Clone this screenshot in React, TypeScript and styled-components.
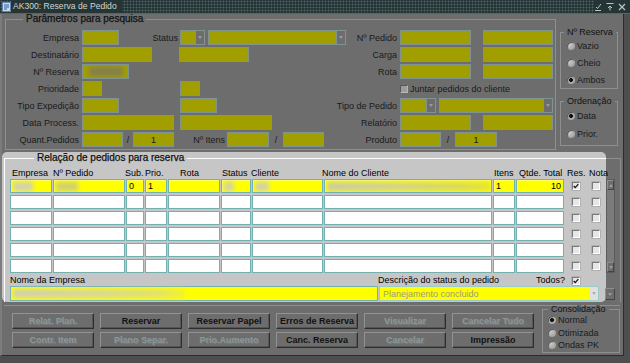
import React from 'react';
import styled, { createGlobalStyle } from 'styled-components';

const DIM_BG = '#6d6d6d';
const DIM_FIELD = '#a19e00';
const DIM_FIELD_BORDER = '#7f9393';
const DIM_LINE = '#8f8f8f';
const PANEL_BG = '#c6c6c6';
const YELLOW = '#ffff00';
const CELL_BORDER = '#74b0b0';

const GlobalStyle = createGlobalStyle`
  html, body { margin: 0; padding: 0; background: #3e3e3e; }
  body { font-family: "Liberation Sans", Arial, sans-serif; font-size: 9px; color: #1a1a1a; }
  * { box-sizing: border-box; }
`;

const Window = styled.div`
  width: 630px;
  height: 363px;
  overflow: hidden;
  display: flex;
  flex-direction: column;
  background: #4e4e4e;
`;

const TitleBar = styled.div`
  height: 14px;
  flex: none;
  display: flex;
  align-items: center;
  background-color: #253535;
  background-image: radial-gradient(circle, #50696a 0.8px, transparent 1.1px);
  background-size: 3px 3px;
  border-bottom: 1px solid #566666;
`;

const TitleIcon = styled.svg`
  margin-left: 2px;
  flex: none;
`;

const TitleText = styled.span`
  background: #253535;
  color: #cdd6d6;
  font-size: 8.6px;
  padding: 0 5px 0 2px;
  line-height: 13px;
  white-space: nowrap;
`;

const TitleSpacer = styled.div`
  flex: 1;
`;

const TitleControls = styled.div`
  display: flex;
  gap: 4px;
  padding-right: 4px;
  background: #253535;
  height: 13px;
  align-items: center;
`;

const Body = styled.div`
  height: 342px;
  width: 624px;
  flex: none;
  display: flex;
  flex-direction: column;
  background: ${DIM_BG};
  border-left: 2px solid #7c7c7c;
  border-right: 1px solid #2c2c2c;
  border-bottom: 1px solid #2c2c2c;
`;

const Top = styled.div`
  height: 136px;
  flex: none;
  display: flex;
  padding-left: 3px;
  gap: 4px;
`;

const Frame = styled.fieldset<{ $w: number; $h: number; $mt?: number; $light?: boolean }>`
  margin: ${p => p.$mt ?? 0}px 0 0 0;
  padding: 0;
  width: ${p => p.$w}px;
  height: ${p => p.$h}px;
  min-width: 0;
  flex: none;
  border: 1px solid ${p => (p.$light ? '#ffffff' : DIM_LINE)};
`;

const Legend = styled.legend<{ $ml: number; $size?: number; $h?: number; $strong?: boolean }>`
  margin-left: ${p => p.$ml}px;
  padding: 0 3px;
  font-size: ${p => p.$size ?? 9}px;
  line-height: ${p => p.$h ?? 10}px;
  height: ${p => p.$h ?? 10}px;
  white-space: nowrap;
  color: #111;
  -webkit-text-stroke: ${p => (p.$strong ? '0.25px #111' : '0')};
`;

const FormGrid = styled.div`
  display: grid;
  grid-template-columns: 76px 97px 171px 50px 83px 72px;
  grid-auto-rows: 15px;
  row-gap: 2px;
  padding-top: 6px;
`;

const LabelCell = styled.div`
  display: flex;
  justify-content: flex-end;
  align-items: center;
  padding-right: 3px;
  white-space: nowrap;
`;

const Cell = styled.div<{ $span?: number; $between?: boolean }>`
  display: flex;
  align-items: center;
  white-space: nowrap;
  grid-column: span ${p => p.$span ?? 1};
  justify-content: ${p => (p.$between ? 'space-between' : 'flex-start')};
  padding-right: ${p => (p.$between ? 1 : 0)}px;
`;

const Field = styled.div<{ $w: number; $ml?: number }>`
  width: ${p => p.$w}px;
  margin-left: ${p => p.$ml ?? 0}px;
  height: 15px;
  flex: none;
  background: ${DIM_FIELD};
  border: 1px solid ${DIM_FIELD_BORDER};
  display: flex;
  align-items: center;
  justify-content: center;
  overflow: hidden;
`;

const Slash = styled.span<{ $w: number }>`
  width: ${p => p.$w}px;
  text-align: center;
  flex: none;
`;

const InlineLabel = styled.span<{ $w: number }>`
  width: ${p => p.$w}px;
  text-align: right;
  padding-right: 2px;
  flex: none;
`;

const Blob = styled.span<{ $w: number; $bg: string; $ml?: number }>`
  display: block;
  width: ${p => p.$w}px;
  height: 9px;
  margin-left: ${p => p.$ml ?? 0}px;
  background: ${p => p.$bg};
  filter: blur(2px);
  flex: none;
`;

const ComboBox = styled.div<{ $w: number; $ml?: number }>`
  width: ${p => p.$w}px;
  margin-left: ${p => p.$ml ?? 0}px;
  height: 15px;
  flex: none;
  display: flex;
  border: 1px solid ${DIM_FIELD_BORDER};
`;

const ComboText = styled.div`
  flex: 1;
  background: ${DIM_FIELD};
`;

const ComboArrow = styled.div<{ $bg?: string; $c?: string }>`
  width: 9px;
  flex: none;
  background: ${p => p.$bg ?? DIM_BG};
  border-left: 1px solid ${DIM_FIELD_BORDER};
  display: flex;
  align-items: center;
  justify-content: center;
  &::after {
    content: '';
    border-left: 2.5px solid transparent;
    border-right: 2.5px solid transparent;
    border-top: 3px solid ${p => p.$c ?? '#9a9a9a'};
  }
`;

const DimCheck = styled.span`
  width: 8px;
  height: 8px;
  flex: none;
  background: #9c9c9c;
  border: 1px solid;
  border-color: #555 #b8b8b8 #b8b8b8 #555;
  margin-right: 2px;
`;

const SideCol = styled.div`
  display: flex;
  flex-direction: column;
  gap: 7px;
`;

const RadioList = styled.div<{ $row: number; $pt?: number; $ml: number }>`
  display: grid;
  grid-auto-rows: ${p => p.$row}px;
  padding-top: ${p => p.$pt ?? 0}px;
  padding-left: ${p => p.$ml}px;
`;

const RadioRow = styled.div`
  display: flex;
  align-items: center;
  gap: 2px;
  white-space: nowrap;
`;

const RadioDot = styled.span<{ $on?: boolean }>`
  width: 8px;
  height: 8px;
  flex: none;
  border-radius: 50%;
  background: ${p =>
    p.$on
      ? 'radial-gradient(circle, #111 0 1.8px, #a8a8a8 2.2px)'
      : 'radial-gradient(circle at 35% 35%, #cacaca, #929292)'};
  box-shadow: inset 1px 1px 0 #5a5a5a;
`;

const Middle = styled.div`
  height: 150px;
  margin-top: 2px;
  flex: none;
  display: flex;
`;

const Panel = styled.div`
  width: 604px;
  flex: none;
  background: ${PANEL_BG};
  border-radius: 5px;
  padding: 1px 0 0 2px;
  color: #000;
`;

const PanelFrame = styled.fieldset`
  margin: 0;
  padding: 0 0 0 5px;
  min-width: 0;
  border: 1px solid #ffffff;
  border-right: none;
  border-bottom: none;
  height: 149px;
`;

const TableGrid = styled.div`
  display: grid;
  grid-template-columns: 43px 73px 19px 23px 53px 31px 72px 169px 23px 49px 21px 20px;
  grid-auto-rows: 14px;
  row-gap: 2px;
`;

const HeaderRow = styled(TableGrid)`
  grid-auto-rows: 12px;
  margin-top: 4px;
`;

const HeadLabel = styled.div<{ $pl: number }>`
  padding-left: ${p => Math.max(p.$pl, 0)}px;
  margin-left: ${p => Math.min(p.$pl, 0)}px;
  line-height: 12px;
  white-space: nowrap;
`;

const TCell = styled.div<{ $bg: string; $right?: boolean }>`
  height: 14px;
  margin-right: 1px;
  background: ${p => p.$bg};
  border: 1px solid ${CELL_BORDER};
  box-shadow: inset 1px 1px 0 #ffffff55;
  display: flex;
  align-items: center;
  justify-content: ${p => (p.$right ? 'flex-end' : 'flex-start')};
  padding: 0 2px;
  overflow: hidden;
  line-height: 12px;
`;

const CheckCell = styled.div<{ $ml: number }>`
  display: flex;
  align-items: center;
  padding-left: ${p => p.$ml}px;
`;

const Check = styled.span`
  width: 8px;
  height: 8px;
  flex: none;
  background: #e6e6e6;
  border: 1px solid;
  border-color: #7a7a7a #ffffff #ffffff #7a7a7a;
  box-shadow: 0 0 0 0.5px #9a9a9a;
  display: flex;
  align-items: center;
  justify-content: center;
`;

const BottomLabels = styled.div`
  display: grid;
  grid-template-columns: 368px 222px;
  height: 11px;
  margin-top: 2px;
  line-height: 11px;
`;

const StatusLabelCell = styled.div`
  display: flex;
  align-items: center;
  justify-content: space-between;
  padding-right: 20px;
`;

const TodosGroup = styled.div`
  display: flex;
  align-items: center;
  gap: 7px;
`;

const BottomFields = styled.div`
  display: flex;
  height: 15px;
`;

const NameField = styled.div`
  width: 368px;
  height: 15px;
  background: ${YELLOW};
  border: 1px solid ${CELL_BORDER};
  display: flex;
  align-items: center;
`;

const StatusField = styled.div`
  width: 220px;
  margin-left: 1px;
  height: 15px;
  background: ${YELLOW};
  border: 1px solid #9ccaca;
  display: flex;
  align-items: center;
`;

const StatusText = styled.span`
  flex: 1;
  padding-left: 3px;
  color: #9c9c7c;
  white-space: nowrap;
`;

const StatusArrow = styled.div`
  width: 9px;
  height: 13px;
  background: #e0e0e0;
  display: flex;
  align-items: center;
  justify-content: center;
  &::after {
    content: '';
    border-left: 2.5px solid transparent;
    border-right: 2.5px solid transparent;
    border-top: 3px solid #b0b0b0;
  }
`;

const Gutter = styled.div`
  width: 17px;
  flex: none;
  padding-top: 6px;
`;

const GutterFrame = styled.div`
  height: 144px;
  width: 15px;
  border-top: 1px solid ${DIM_LINE};
  border-right: 1px solid ${DIM_LINE};
  display: flex;
  flex-direction: column;
  padding-top: 20px;
`;

const ScrollBar = styled.div`
  width: 9px;
  height: 94px;
  display: flex;
  flex-direction: column;
  background: #7b7b7b;
  border: 1px solid #5c5c5c;
`;

const ScrollBtn = styled.div<{ $down?: boolean }>`
  height: 10px;
  flex: none;
  background: ${DIM_BG};
  border: 1px solid;
  border-color: #8e8e8e #444 #444 #8e8e8e;
  display: flex;
  align-items: center;
  justify-content: center;
  &::after {
    content: '';
    border-left: 2px solid transparent;
    border-right: 2px solid transparent;
    ${p => (p.$down ? 'border-top' : 'border-bottom')}: 3px solid #9a9a9a;
  }
`;

const ScrollTrack = styled.div`
  flex: 1;
`;

const GutterBtn = styled.div`
  width: 10px;
  height: 12px;
  margin-top: 15px;
  margin-left: -1px;
  background: ${DIM_BG};
  border: 1px solid;
  border-color: #8e8e8e #444 #444 #8e8e8e;
  display: flex;
  align-items: center;
  justify-content: center;
  &::after {
    content: '';
    border-left: 2px solid transparent;
    border-right: 2px solid transparent;
    border-top: 3px solid #9a9a9a;
  }
`;

const Bottom = styled.div`
  margin: 3px 3px 0 2px;
  border-top: 1px solid ${DIM_LINE};
  display: flex;
  padding-left: 8px;
  flex: 1;
`;

const ButtonGrid = styled.div`
  display: grid;
  grid-template-columns: repeat(6, 82px);
  grid-auto-rows: 16px;
  column-gap: 6px;
  row-gap: 3px;
  margin-top: 7px;
  align-self: flex-start;
`;

const Btn = styled.button<{ $off?: boolean }>`
  height: 16px;
  padding: 0;
  font-family: "Liberation Sans", Arial, sans-serif;
  font-size: 9px;
  font-weight: bold;
  background: ${DIM_BG};
  border: 1px solid;
  border-color: #929292 #2e2e2e #2e2e2e #929292;
  box-shadow: inset -1px -1px 0 #555;
  color: ${p => (p.$off ? '#8a9898' : '#111')};
  text-shadow: ${p => (p.$off ? '1px 1px 0 #7c7c7c' : 'none')};
  white-space: nowrap;
`;

const ConsolFrame = styled(Frame)`
  margin-left: 8px;
`;

const Row = ({ children }: { children: React.ReactNode }) => <>{children}</>;

const CheckMark = () => (
  <svg width="7" height="6" viewBox="0 0 7 6">
    <polyline points="0.8,3 2.6,4.8 6.2,0.8" fill="none" stroke="#111" strokeWidth="1.4" />
  </svg>
);

const rows = [0, 1, 2, 3, 4, 5];

export default function App() {
  return (
    <>
      <GlobalStyle />
      <Window>
        <TitleBar>
          <TitleIcon width="9" height="10" viewBox="0 0 9 10">
            <rect x="0.5" y="0.5" width="8" height="9" fill="#c9d9e9" stroke="#5f86b0" />
            <path d="M2 3h5M2 5h5M2 7h3" stroke="#2f5f9f" strokeWidth="1" />
          </TitleIcon>
          <TitleText>AK300: Reserva de Pedido</TitleText>
          <TitleSpacer />
          <TitleControls>
            <svg width="8" height="8" viewBox="0 0 8 8">
              <path d="M1 7.5h6M2 4l1.5 1.5L7 1" stroke="#b9c4c4" strokeWidth="1" fill="none" />
            </svg>
            <svg width="8" height="8" viewBox="0 0 8 8">
              <path d="M0.5 0.5h7M4 7.5V3M2 5l2-2 2 2" stroke="#b9c4c4" strokeWidth="1" fill="none" />
            </svg>
            <svg width="8" height="8" viewBox="0 0 8 8">
              <path d="M1 1l6 6M7 1L1 7" stroke="#b9c4c4" strokeWidth="1.2" fill="none" />
            </svg>
          </TitleControls>
        </TitleBar>
        <Body>
          <Top>
            <Frame $w={551} $h={136}>
              <Legend $ml={17} $size={10} $strong>Parâmetros para pesquisa</Legend>
              <FormGrid>
                <Row>
                  <LabelCell>Empresa</LabelCell>
                  <Cell $between>
                    <Field $w={37} />
                    <span>Status</span>
                  </Cell>
                  <Cell>
                    <ComboBox $w={25} $ml={1}>
                      <ComboText />
                      <ComboArrow />
                    </ComboBox>
                    <ComboBox $w={138} $ml={3}>
                      <ComboText />
                      <ComboArrow />
                    </ComboBox>
                  </Cell>
                  <LabelCell>Nº Pedido</LabelCell>
                  <Cell><Field $w={71} /></Cell>
                  <Cell><Field $w={70} /></Cell>
                </Row>
                <Row>
                  <LabelCell>Destinatário</LabelCell>
                  <Cell><Field $w={70} /></Cell>
                  <Cell><Field $w={70} /></Cell>
                  <LabelCell>Carga</LabelCell>
                  <Cell><Field $w={71} /></Cell>
                  <Cell><Field $w={70} /></Cell>
                </Row>
                <Row>
                  <LabelCell>Nº Reserva</LabelCell>
                  <Cell>
                    <Field $w={47}>
                      <Blob $w={34} $bg="#857f4c" />
                    </Field>
                  </Cell>
                  <Cell />
                  <LabelCell>Rota</LabelCell>
                  <Cell><Field $w={71} /></Cell>
                  <Cell><Field $w={70} /></Cell>
                </Row>
                <Row>
                  <LabelCell>Prioridade</LabelCell>
                  <Cell><Field $w={20} /></Cell>
                  <Cell><Field $w={20} $ml={1} /></Cell>
                  <Cell />
                  <Cell $span={2}>
                    <DimCheck />
                    <span>Juntar pedidos do cliente</span>
                  </Cell>
                </Row>
                <Row>
                  <LabelCell>Tipo Expedição</LabelCell>
                  <Cell><Field $w={37} /></Cell>
                  <Cell><Field $w={37} $ml={1} /></Cell>
                  <LabelCell>Tipo de Pedido</LabelCell>
                  <Cell $span={2}>
                    <ComboBox $w={36}>
                      <ComboText />
                      <ComboArrow />
                    </ComboBox>
                    <ComboBox $w={114} $ml={3}>
                      <ComboText />
                      <ComboArrow />
                    </ComboBox>
                  </Cell>
                </Row>
                <Row>
                  <LabelCell>Data Process.</LabelCell>
                  <Cell><Field $w={92} /></Cell>
                  <Cell><Field $w={92} $ml={1} /></Cell>
                  <LabelCell>Relatório</LabelCell>
                  <Cell><Field $w={71} /></Cell>
                  <Cell><Field $w={70} /></Cell>
                </Row>
                <Row>
                  <LabelCell>Quant.Pedidos</LabelCell>
                  <Cell>
                    <Field $w={41} />
                    <Slash $w={10}>/</Slash>
                    <Field $w={41}>1</Field>
                  </Cell>
                  <Cell>
                    <InlineLabel $w={48}>Nº Itens</InlineLabel>
                    <Field $w={42} />
                    <Slash $w={14}>/</Slash>
                    <Field $w={41} />
                  </Cell>
                  <LabelCell>Produto</LabelCell>
                  <Cell $span={2}>
                    <Field $w={41} />
                    <Slash $w={14}>/</Slash>
                    <Field $w={42}>1</Field>
                  </Cell>
                </Row>
              </FormGrid>
            </Frame>
            <SideCol>
              <Frame $w={58} $h={62} $mt={13}>
                <Legend $ml={3}>Nº Reserva</Legend>
                <RadioList $row={17} $ml={6}>
                  <RadioRow><RadioDot />Vazio</RadioRow>
                  <RadioRow><RadioDot />Cheio</RadioRow>
                  <RadioRow><RadioDot $on />Ambos</RadioRow>
                </RadioList>
              </Frame>
              <Frame $w={58} $h={50}>
                <Legend $ml={3}>Ordenação</Legend>
                <RadioList $row={18} $pt={1} $ml={6}>
                  <RadioRow><RadioDot $on />Data</RadioRow>
                  <RadioRow><RadioDot />Prior.</RadioRow>
                </RadioList>
              </Frame>
            </SideCol>
          </Top>

          <Middle>
            <Panel>
              <PanelFrame>
                <Legend $ml={24} $size={10} $strong>Relação de pedidos para reserva</Legend>
                <HeaderRow>
                  <HeadLabel $pl={2}>Empresa</HeadLabel>
                  <HeadLabel $pl={0}>Nº Pedido</HeadLabel>
                  <HeadLabel $pl={-1}>Sub.</HeadLabel>
                  <HeadLabel $pl={0}>Prio.</HeadLabel>
                  <HeadLabel $pl={12}>Rota</HeadLabel>
                  <HeadLabel $pl={1}>Status</HeadLabel>
                  <HeadLabel $pl={-1}>Cliente</HeadLabel>
                  <HeadLabel $pl={-2}>Nome do Cliente</HeadLabel>
                  <HeadLabel $pl={1}>Itens</HeadLabel>
                  <HeadLabel $pl={3}>Qtde. Total</HeadLabel>
                  <HeadLabel $pl={2}>Res.</HeadLabel>
                  <HeadLabel $pl={3}>Nota</HeadLabel>
                </HeaderRow>
                <TableGrid>
                  {rows.map(i => {
                    const first = i === 0;
                    const bg = first ? YELLOW : '#ffffff';
                    return (
                      <React.Fragment key={i}>
                        <TCell $bg={bg}>{first && <Blob $w={20} $bg="#d2d2b4" />}</TCell>
                        <TCell $bg={bg}>{first && <Blob $w={22} $bg="#d0d070" />}</TCell>
                        <TCell $bg={bg}>{first ? '0' : ''}</TCell>
                        <TCell $bg={bg}>{first ? '1' : ''}</TCell>
                        <TCell $bg={bg} />
                        <TCell $bg={bg}>{first && <Blob $w={10} $bg="#d2d2ac" />}</TCell>
                        <TCell $bg={bg}>{first && <Blob $w={14} $bg="#d2d2ac" />}</TCell>
                        <TCell $bg={bg}>
                          {first && (
                            <Blob
                              $w={164}
                              $bg="linear-gradient(90deg, #cbcba4, #d4d48c 40%, #dada5c 80%, #e6e630)"
                            />
                          )}
                        </TCell>
                        <TCell $bg={bg}>{first ? '1' : ''}</TCell>
                        <TCell $bg={bg} $right>{first ? '10' : ''}</TCell>
                        <CheckCell $ml={7}>
                          <Check>{first && <CheckMark />}</Check>
                        </CheckCell>
                        <CheckCell $ml={6}>
                          <Check />
                        </CheckCell>
                      </React.Fragment>
                    );
                  })}
                </TableGrid>
                <BottomLabels>
                  <span>Nome da Empresa</span>
                  <StatusLabelCell>
                    <span>Descrição do status do pedido</span>
                    <TodosGroup>
                      <span>Todos?</span>
                      <Check><CheckMark /></Check>
                    </TodosGroup>
                  </StatusLabelCell>
                </BottomLabels>
                <BottomFields>
                  <NameField>
                    <Blob
                      $w={172}
                      $ml={2}
                      $bg="linear-gradient(90deg, #d0d0b0, #d8d898 50%, #e2e26c 85%, #f2f230)"
                    />
                  </NameField>
                  <StatusField>
                    <StatusText>Planejamento concluido</StatusText>
                    <StatusArrow />
                  </StatusField>
                </BottomFields>
              </PanelFrame>
            </Panel>
            <Gutter>
              <GutterFrame>
                <ScrollBar>
                  <ScrollBtn />
                  <ScrollTrack />
                  <ScrollBtn $down />
                </ScrollBar>
                <GutterBtn />
              </GutterFrame>
            </Gutter>
          </Middle>

          <Bottom>
            <ButtonGrid>
              <Btn $off>Relat. Plan.</Btn>
              <Btn>Reservar</Btn>
              <Btn>Reservar Papel</Btn>
              <Btn>Erros de Reserva</Btn>
              <Btn $off>Visualizar</Btn>
              <Btn $off>Cancelar Tudo</Btn>
              <Btn $off>Contr. Item</Btn>
              <Btn $off>Plano Separ.</Btn>
              <Btn $off>Prio.Aumento</Btn>
              <Btn>Canc. Reserva</Btn>
              <Btn $off>Cancelar</Btn>
              <Btn>Impressão</Btn>
            </ButtonGrid>
            <ConsolFrame $w={78} $h={48} $mt={-1}>
              <Legend $ml={5} $h={9}>Consolidação</Legend>
              <RadioList $row={12.5} $ml={5}>
                <RadioRow><RadioDot $on />Normal</RadioRow>
                <RadioRow><RadioDot />Otimizada</RadioRow>
                <RadioRow><RadioDot />Ondas PK</RadioRow>
              </RadioList>
            </ConsolFrame>
          </Bottom>
        </Body>
      </Window>
    </>
  );
}
